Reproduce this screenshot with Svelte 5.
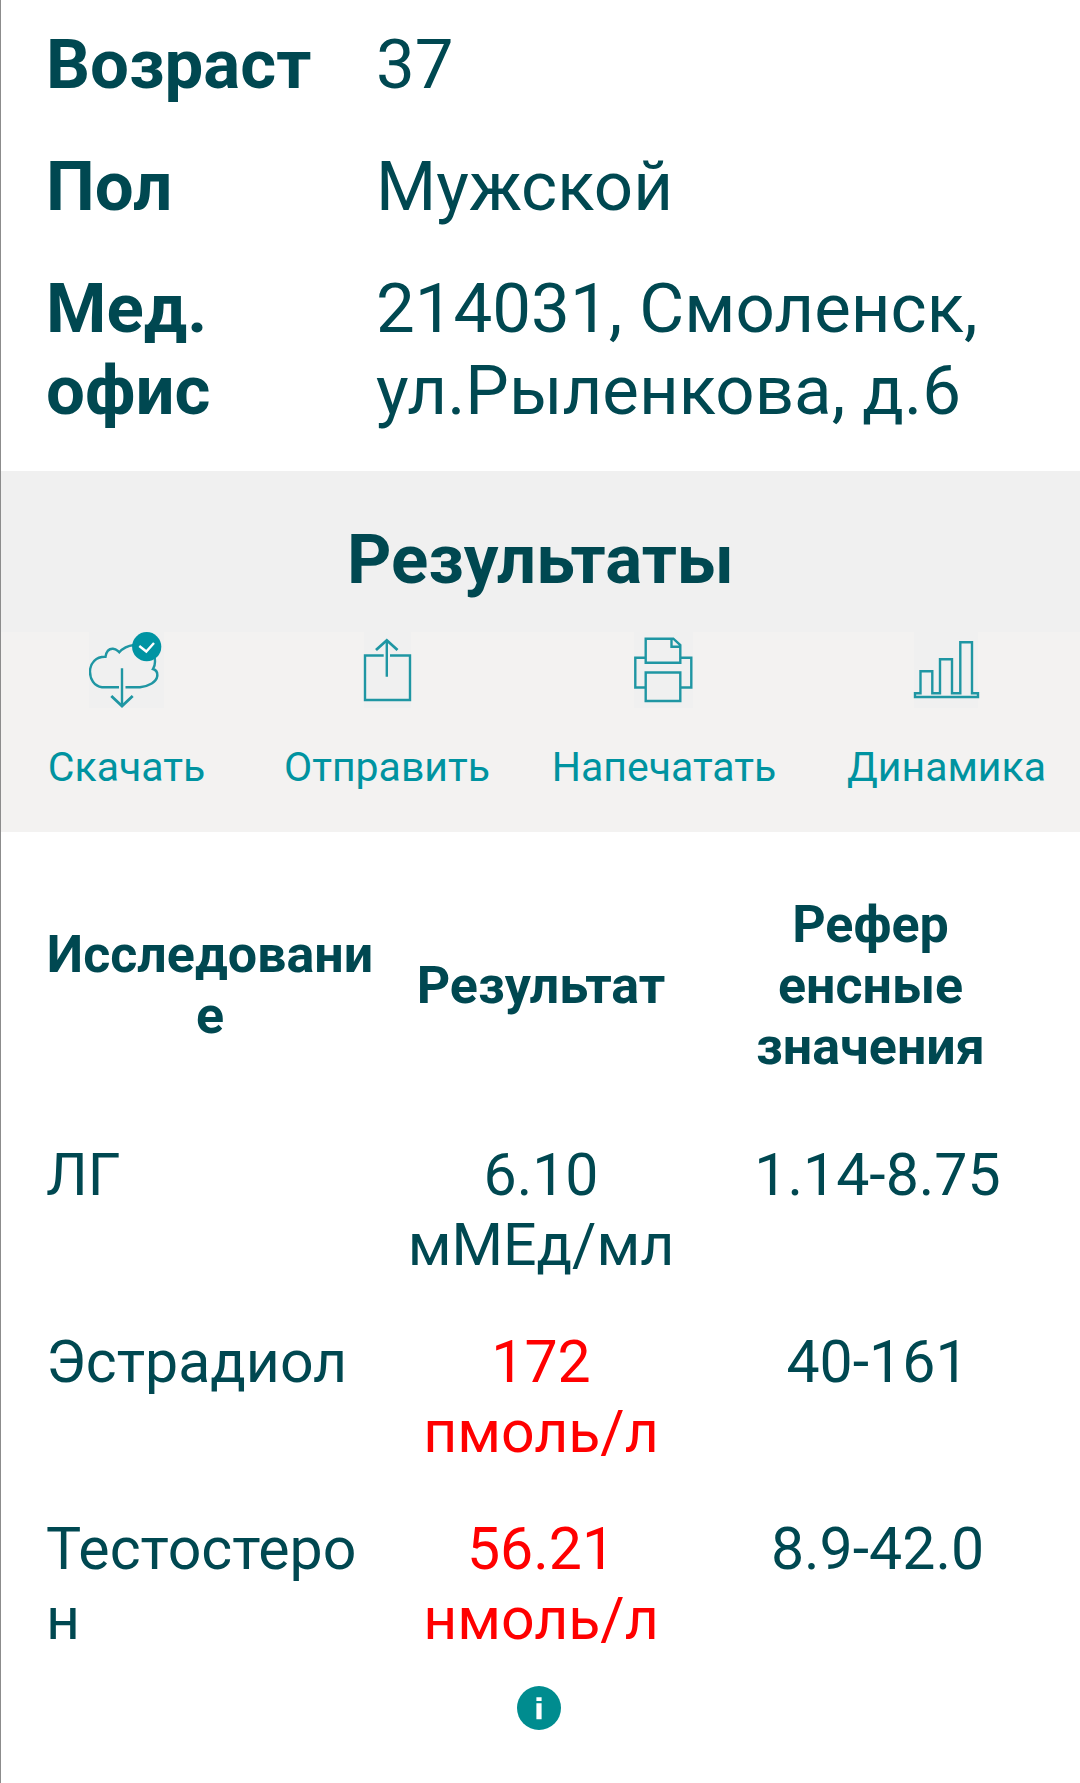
<script>
  const patient = [
    { label: ["Возраст"], value: ["37"] },
    { label: ["Пол"], value: ["Мужской"] },
    { label: ["Мед.", "офис"], value: ["214031, Смоленск,", "ул.Рыленкова, д.6"] }
  ]

  const results = [
    { name: ["ЛГ"], value: "6.10", unit: "мМЕд/мл", range: "1.14-8.75" },
    { name: ["Эстрадиол"], value: "172", unit: "пмоль/л", range: "40-161", out: true },
    { name: ["Тестостеро", "н"], value: "56.21", unit: "нмоль/л", range: "8.9-42.0", out: true, info: true }
  ]
</script>

{#snippet lines(list)}
  {#each list as line}<span class="line">{line}</span>{/each}
{/snippet}

<main>
  <dl class="patient">
    {#each patient as row}
      <dt>{@render lines(row.label)}</dt>
      <dd>{@render lines(row.value)}</dd>
    {/each}
  </dl>

  <h2>Результаты</h2>

  <nav>
    <button class="download">
      <svg width="76" height="76" viewBox="1 0 76 76">
        <rect class="tile" x="1" width="75" height="76" />
        <path d="M31 55.2H14C6 54 1.9 47 2 39.5C2.1 31 8 24.5 17.5 24.8C18.5 18 21.5 16.5 25 16.7C28.5 16.9 29 18.5 31.3 20.3C35 16 40 13.7 46 13M66.7 26C67.5 31 67 34 65 37C68 38 69.6 41 69.3 44C68.5 50 61 54 52 55.2H37.5M34 36.3V74" />
        <path class="head" d="M23.3 64L34 74L44.7 64" />
        <circle class="badge" cx="58.7" cy="14.7" r="14.6" />
        <path class="check" d="M51.3 14L58.3 19.5L66 11" />
      </svg>
      <span>Скачать</span>
    </button>
    <button class="send">
      <svg width="76" height="76" viewBox="0 0 76 76">
        <rect class="tile" x="15" width="47" height="76" />
        <path d="M34.7 23.5H16V68H61V23.5H41M37.8 8V44.7" />
        <path class="head" d="M27 18L37.8 8.3L48.5 18" />
      </svg>
      <span>Отправить</span>
    </button>
    <button class="print">
      <svg width="76" height="76" viewBox="0 0 76 76">
        <rect class="tile" x="8" width="59" height="76" />
        <path d="M19.7 6.7H47.3L54.3 13V30.7H19.7ZM45.5 6.7V14.7H54.3M19.7 25.7H9.3V55.5H19.7M54.3 25.7H65.3V55.5H54.3M19.7 40.5H54.3V69H19.7Z" />
      </svg>
      <span>Напечатать</span>
    </button>
    <button class="trend">
      <svg width="76" height="76" viewBox="0 0 76 76">
        <rect class="tile" x="5" width="64" height="76" />
        <path d="M6 61.3H11.5V39.3H23.3V61.3H31V27.3H43V61.3H51.3V10.3H63V61.3H69V65H6Z" />
      </svg>
      <span>Динамика</span>
    </button>
  </nav>

  <table>
    <thead>
      <tr>
        <th class="name">{@render lines(["Исследовани", "е"])}</th>
        <th class="result">Результат</th>
        <th class="range">{@render lines(["Рефер", "енсные", "значения"])}</th>
      </tr>
    </thead>
    <tbody>
      {#each results as row}
        <tr>
          <td class="name">{@render lines(row.name)}</td>
          <td class="result" class:out={row.out}>
            {@render lines([row.value, row.unit])}
            {#if row.info}
              <svg class="info" width="46" height="46" viewBox="0 0 46 46">
                <circle cx="23" cy="23" r="22" />
                <path d="M20.4 12.3H25.6V16H20.4ZM20.4 18.3H25.6V34.3H20.4Z" />
              </svg>
            {/if}
          </td>
          <td class="range">{row.range}</td>
        </tr>
      {/each}
    </tbody>
  </table>
</main>

<style>
  :global(body) {
    background: #fff;
  }

  main {
    box-sizing: border-box;
    height: 1783px;
    overflow: hidden;
    border-left: 1px solid #8c8c8c;
    color: #004851;
    font-family: Roboto, sans-serif;
  }

  .line {
    display: block;
    white-space: nowrap;
  }

  .patient {
    display: grid;
    grid-template-columns: 330px 1fr;
    row-gap: 40px;
    box-sizing: border-box;
    height: 471px;
    margin: 0;
    padding: 24px 0 0 45px;
    align-content: start;
    font-size: 69px;
    line-height: 82px;
  }

  dt {
    font-weight: 700;
  }

  dd {
    margin: 0;
  }

  h2 {
    height: 161px;
    margin: 0;
    background: #f0f0f0;
    font-size: 69px;
    line-height: 177px;
    text-align: center;
  }

  nav {
    display: flex;
    height: 200px;
    background: #f3f2f1;
  }

  button {
    display: flex;
    flex: none;
    flex-direction: column;
    align-items: center;
    padding: 0;
    border: 0;
    background: none;
    color: #0093a0;
    font: 41px/48px Roboto, sans-serif;
  }

  button span {
    margin-top: 35px;
  }

  .download { width: 251px; }
  .send { width: 270px; }
  .print { width: 284px; }
  .trend { width: 281px; }

  path {
    fill: none;
    stroke: #1f96a3;
    stroke-width: 2.4;
  }

  .head {
    stroke-width: 2.8;
  }

  .tile {
    fill: #f0f0f0;
  }

  .badge {
    fill: #0094a3;
  }

  .check {
    stroke: #fff;
  }

  table {
    width: 1001px;
    margin: 55px 0 0 45px;
    border-collapse: collapse;
    table-layout: fixed;
    font-size: 59px;
    line-height: 70px;
  }

  th, td {
    padding: 0;
    text-align: center;
  }

  th {
    height: 196px;
    padding-bottom: 57px;
    font-size: 52px;
    line-height: 61px;
  }

  th.range {
    padding-right: 14px;
  }

  td {
    height: 187px;
    vertical-align: top;
  }

  .name { width: 328px; }
  .result { width: 334px; }

  td.name {
    text-align: left;
  }

  .out {
    color: #f00;
  }

  .info {
    display: block;
    margin: 31px auto 0 142px;
  }

  .info circle {
    fill: #008c8f;
  }

  .info path {
    fill: #fff;
    stroke: none;
  }
</style>
